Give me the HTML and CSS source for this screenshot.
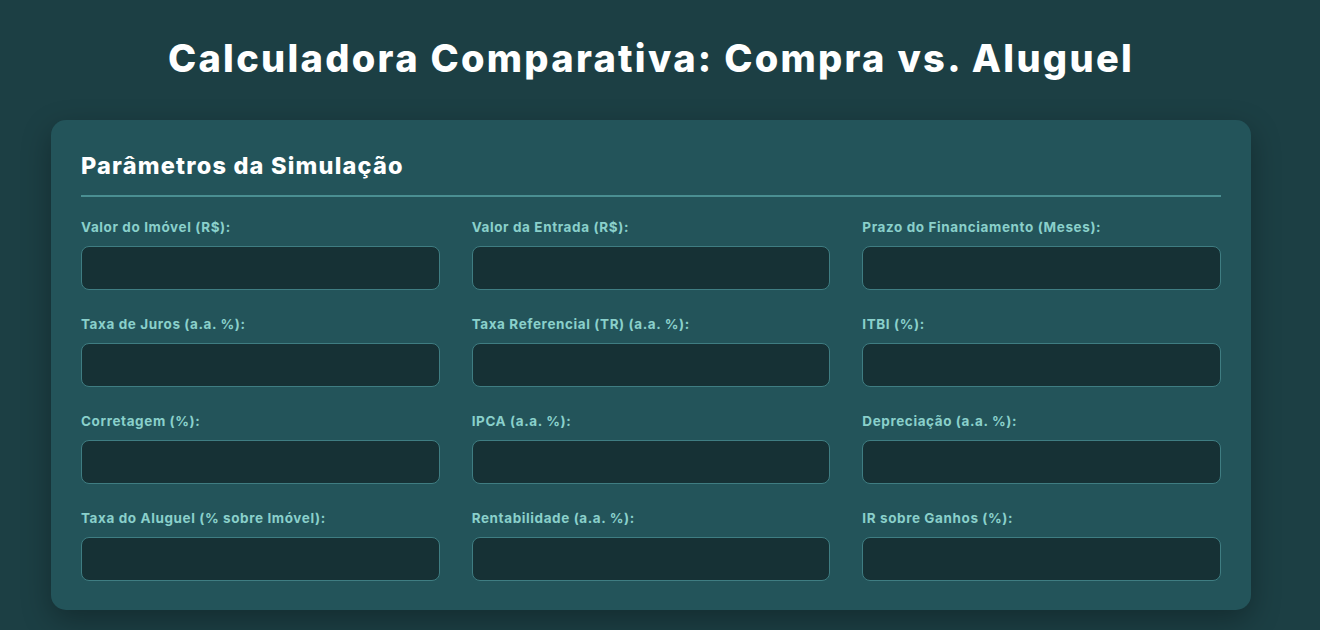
FILE: index.html
```html
<!DOCTYPE html>
<html lang="pt-BR">
<head>
<meta charset="utf-8">
<title>Calculadora Comparativa</title>
<link rel="stylesheet" href="styles.css">
</head>
<body>
<div class="page">
  <h1 class="title">Calculadora Comparativa: Compra vs. Aluguel</h1>
  <section class="card">
    <h2 class="card-title">Parâmetros da Simulação</h2>
    <div class="grid">
      <div class="field"><label>Valor do Imóvel (R$):</label><input type="text"></div>
      <div class="field"><label>Valor da Entrada (R$):</label><input type="text"></div>
      <div class="field"><label>Prazo do Financiamento (Meses):</label><input type="text"></div>
      <div class="field"><label>Taxa de Juros (a.a. %):</label><input type="text"></div>
      <div class="field"><label>Taxa Referencial (TR) (a.a. %):</label><input type="text"></div>
      <div class="field"><label>ITBI (%):</label><input type="text"></div>
      <div class="field"><label>Corretagem (%):</label><input type="text"></div>
      <div class="field"><label>IPCA (a.a. %):</label><input type="text"></div>
      <div class="field"><label>Depreciação (a.a. %):</label><input type="text"></div>
      <div class="field"><label>Taxa do Aluguel (% sobre Imóvel):</label><input type="text"></div>
      <div class="field"><label>Rentabilidade (a.a. %):</label><input type="text"></div>
      <div class="field"><label>IR sobre Ganhos (%):</label><input type="text"></div>
    </div>
  </section>
</div>
</body>
</html>
```
FILE: styles.css
```css
* { box-sizing: border-box; }
html, body { margin: 0; padding: 0; }
body {
  background: #1c3f44;
  font-family: "Inter", "Noto Sans", sans-serif;
  color: #ffffff;
  height: 630px;
  overflow: hidden;
  padding-right: 18px;
}
.page {
  width: 1200px;
  margin: 0 auto;
  padding-top: 34px;
}
.title {
  margin: 0 0 38px;
  text-align: center;
  font-size: 38px;
  line-height: 48px;
  font-weight: 800;
  letter-spacing: 2.3px;
  color: #ffffff;
}
.card {
  background: #23545a;
  border-radius: 15px;
  padding: 30px 30px 29px;
  box-shadow: 0 10px 30px rgba(0, 0, 0, 0.3);
}
.card-title {
  margin: 0 0 20px;
  padding-bottom: 13px;
  font-size: 23.5px;
  line-height: 32px;
  font-weight: 800;
  letter-spacing: 1.2px;
  border-bottom: 2px solid #4a8f92;
}
.grid {
  display: grid;
  grid-template-columns: repeat(3, 1fr);
  column-gap: 32px;
  row-gap: 24px;
}
.field {
  display: flex;
  flex-direction: column;
}
.field label {
  font-size: 13.5px;
  line-height: 20px;
  font-weight: 700;
  letter-spacing: 0.6px;
  color: #8ad0cb;
  margin-bottom: 9px;
}
.field input {
  height: 44px;
  background: #163135;
  border: 1px solid #3f7d82;
  border-radius: 8px;
  color: #ffffff;
  font-family: inherit;
  font-size: 15px;
  padding: 0 12px;
  outline: none;
}
```
